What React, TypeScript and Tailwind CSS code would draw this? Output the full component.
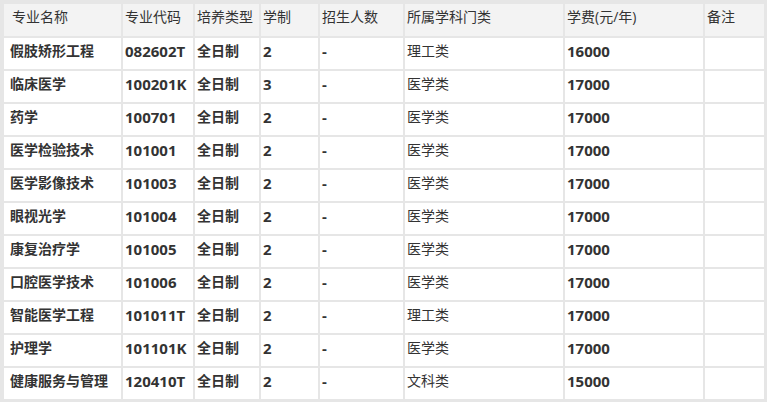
const rows = [
  ["假肢矫形工程", "082602T", "全日制", "2", "-", "理工类", "16000", ""],
  ["临床医学", "100201K", "全日制", "3", "-", "医学类", "17000", ""],
  ["药学", "100701", "全日制", "2", "-", "医学类", "17000", ""],
  ["医学检验技术", "101001", "全日制", "2", "-", "医学类", "17000", ""],
  ["医学影像技术", "101003", "全日制", "2", "-", "医学类", "17000", ""],
  ["眼视光学", "101004", "全日制", "2", "-", "医学类", "17000", ""],
  ["康复治疗学", "101005", "全日制", "2", "-", "医学类", "17000", ""],
  ["口腔医学技术", "101006", "全日制", "2", "-", "医学类", "17000", ""],
  ["智能医学工程", "101011T", "全日制", "2", "-", "理工类", "17000", ""],
  ["护理学", "101101K", "全日制", "2", "-", "医学类", "17000", ""],
  ["健康服务与管理", "120410T", "全日制", "2", "-", "文科类", "15000", ""],
]

const headers = ["专业名称", "专业代码", "培养类型", "学制", "招生人数", "所属学科门类", "学费(元/年)", "备注"]

// per-column body styles: weight, and a slightly larger size for latin/number columns
const cellStyle = [
  "font-bold",
  "font-bold text-[15px]",
  "font-bold",
  "font-bold text-[15px]",
  "font-bold text-[15px]",
  "font-normal",
  "font-bold text-[15px]",
  "font-normal",
]

export default function App() {
  return (
    <div className="w-[774px] h-[407px] bg-white text-[#333] text-[14px] leading-[20px] font-['Open_Sans','Noto_Sans_CJK_SC',sans-serif]">
      <div className="w-[767px] bg-[#e6e6e6] pt-[4px] pl-[4px] pr-[3px] pb-[3px] grid grid-cols-[117px_70px_64px_57px_83px_158px_138px_59px] grid-rows-[32px] auto-rows-[31px] gap-[2px]">
        {headers.map((h, i) => (
          <div key={h} className={`bg-[#f3f3f3] pt-[3px] ${i === 0 ? "pl-[8px]" : "pl-[2px]"}`}>
            {h}
          </div>
        ))}
        {rows.map((r) =>
          r.map((c, i) => (
            <div
              key={r[0] + i}
              className={`bg-white pt-[3px] ${i === 0 ? "pl-[6px]" : "pl-[2px]"} ${cellStyle[i]}`}
            >
              {c}
            </div>
          ))
        )}
      </div>
    </div>
  )
}
